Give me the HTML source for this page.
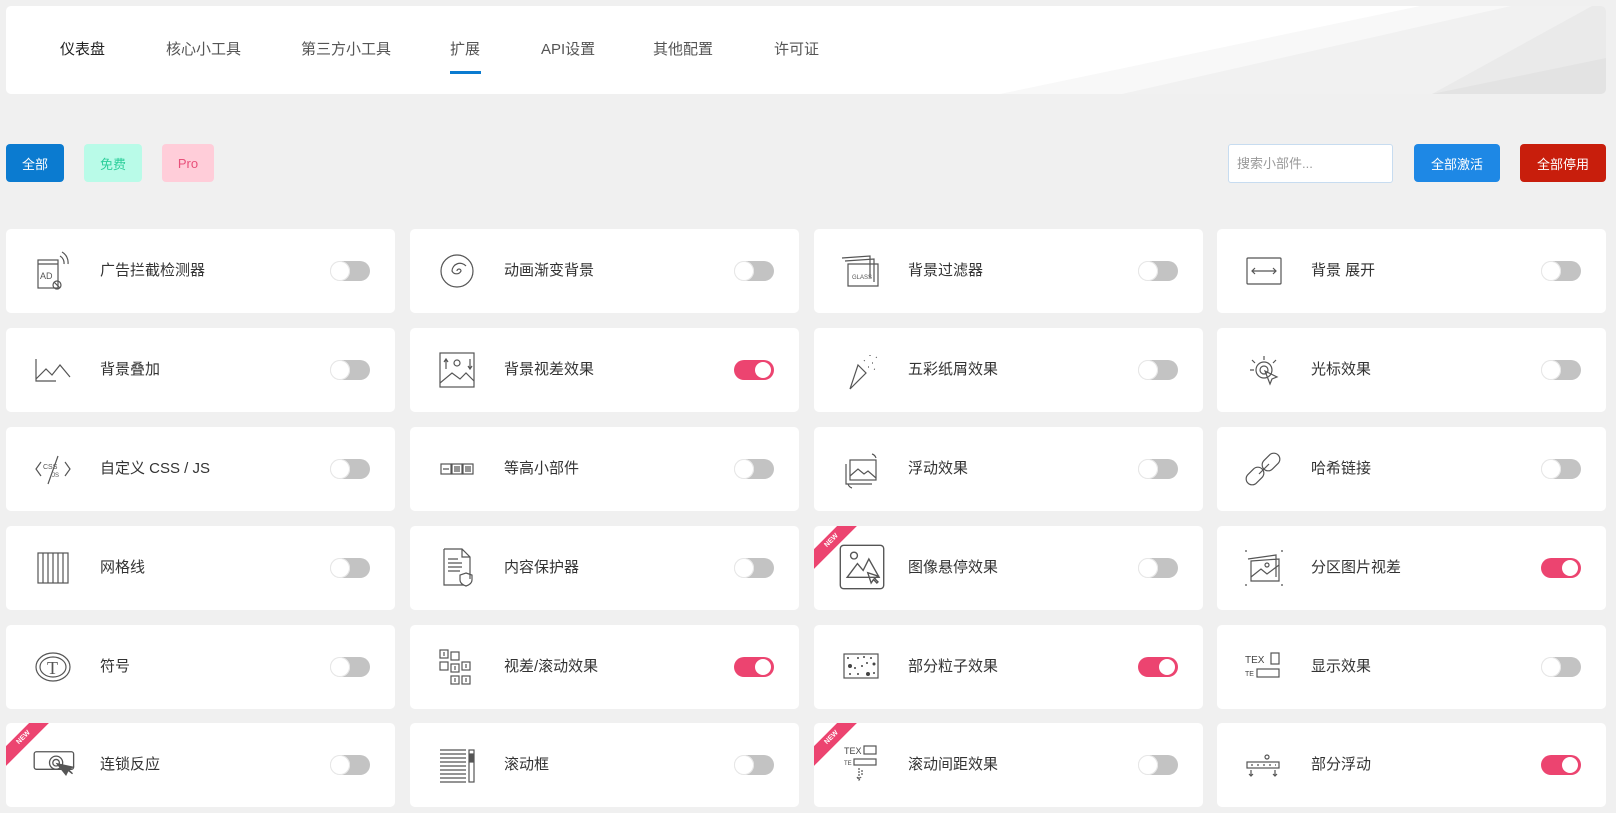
<!DOCTYPE html>
<html><head><meta charset="utf-8"><style>
*{box-sizing:border-box;margin:0;padding:0}
body{width:1616px;height:813px;background:#f0f0f0;font-family:"Liberation Sans","Noto Sans CJK SC",sans-serif;position:relative;overflow:hidden;color:#333}
.nav{position:absolute;left:6px;top:6px;width:1600px;height:88px;background:#fff;border-radius:5px;overflow:hidden}
.nav svg.bg{position:absolute;left:0;top:0}
.tab{position:absolute;top:34px;font-size:15px;color:#555;line-height:20px}
.ul{position:absolute;left:444px;top:65px;width:31px;height:3px;background:#0b7bd0}
.btn{position:absolute;top:144px;height:38px;border-radius:4px;font-size:13px;display:flex;align-items:center;justify-content:center}
.search{position:absolute;left:1228px;top:144px;width:165px;height:39px;border:1px solid #c7dcf0;border-radius:3px;background:#fff;font-size:13px;color:#999;padding:12px 8px;line-height:14px}
.card{position:absolute;width:389px;height:84px;background:#fff;border-radius:5px;overflow:hidden}
.card .ic{position:absolute;left:26px;top:21px;width:42px;height:42px}
.card .t{position:absolute;left:94px;top:32px;font-size:15px;line-height:20px;color:#333}
.tg{position:absolute;left:324px;top:32px;width:40px;height:20px;border-radius:10px;background:#c3c3c3}
.tg::after{content:"";position:absolute;left:0;top:0;width:20px;height:20px;border-radius:50%;background:#fff;box-shadow:0 0 0 1px #e6e6e6 inset}
.tg.on{background:#ec4470}
.tg.on::after{left:21px;top:2px;width:16px;height:16px;box-shadow:none}
.new{position:absolute;left:-22px;top:8px;width:80px;height:14px;background:#ec4470;transform:rotate(-45deg);color:#fff;font-size:7px;text-align:center;line-height:14px;font-weight:bold}
svg.ic{fill:none;stroke:#555;stroke-width:1.2}
</style></head><body>
<div class="nav">
<svg class="bg" width="1600" height="88"><polygon points="994,88 1414,0 1600,0 1600,88" fill="#f8f8f8"/><polygon points="1116,88 1505,0 1600,0 1600,88" fill="#f1f1f1"/><polygon points="1426,88 1586,0 1600,0 1600,88" fill="#eaeaea"/><polygon points="1426,88 1600,52 1600,88" fill="#e3e3e3"/></svg>
<div class="tab" style="left:54px;color:#222">仪表盘</div>
<div class="tab" style="left:160px">核心小工具</div>
<div class="tab" style="left:295px">第三方小工具</div>
<div class="tab" style="left:444px">扩展</div>
<div class="tab" style="left:535px">API设置</div>
<div class="tab" style="left:647px">其他配置</div>
<div class="tab" style="left:768px">许可证</div>
<div class="ul"></div>
</div>
<div class="btn" style="left:6px;width:58px;background:#0b7bd0;color:#fff">全部</div>
<div class="btn" style="left:84px;width:58px;background:#b9fbe8;color:#2ecf9b">免费</div>
<div class="btn" style="left:162px;width:52px;background:#ffcdd9;color:#e8507a">Pro</div>
<div class="search">搜索小部件...</div>
<div class="btn" style="left:1414px;width:86px;background:#1e88e5;color:#fff">全部激活</div>
<div class="btn" style="left:1520px;width:86px;background:#c81e0c;color:#fff">全部停用</div>

<!-- row 1 -->
<div class="card" style="left:6px;top:229px"><svg class="ic" viewBox="0 0 42 42"><rect x="6" y="10" width="20" height="28"/><line x1="6" y1="14" x2="26" y2="14"/><text x="8" y="29" font-size="9" fill="#555" stroke="none" font-family="Liberation Sans">AD</text><circle cx="25" cy="35" r="4"/><line x1="22" y1="32" x2="28" y2="38"/><path d="M28 6a8 8 0 0 1 4 8M30 2a12 12 0 0 1 6 12"/></svg><div class="t">广告拦截检测器</div><div class="tg"></div></div>
<div class="card" style="left:410px;top:229px"><svg class="ic" viewBox="0 0 42 42"><circle cx="21" cy="21" r="16"/><path d="M21 21a2 2 0 0 1 4 0a5 5 0 0 1-9 0a8 8 0 0 1 14-5"/></svg><div class="t">动画渐变背景</div><div class="tg"></div></div>
<div class="card" style="left:814px;top:229px"><svg class="ic" viewBox="0 0 42 42"><path d="M2 8l28-2v22M5 11l29-2v23M8 14h30v22H8z"/><text x="12" y="29" font-size="6" fill="#555" stroke="none">GLASS</text></svg><div class="t">背景过滤器</div><div class="tg"></div></div>
<div class="card" style="left:1217px;top:229px"><svg class="ic" viewBox="0 0 42 42"><rect x="4" y="8" width="34" height="26" rx="1"/><path d="M9 21h24M12 18l-3 3 3 3M30 18l3 3-3 3"/></svg><div class="t">背景 展开</div><div class="tg"></div></div>
<!-- row 2 -->
<div class="card" style="left:6px;top:328px"><svg class="ic" viewBox="0 0 42 42"><path d="M4 10v22h20M4 30l10-10 6 6 8-10 10 12"/></svg><div class="t">背景叠加</div><div class="tg"></div></div>
<div class="card" style="left:410px;top:328px"><svg class="ic" viewBox="0 0 42 42"><rect x="4" y="4" width="34" height="34"/><path d="M4 34l12-10 8 6 6-6 8 8M10 20v-10M8 13l2-3 2 3M34 10v10M32 17l2 3 2-3"/><circle cx="21" cy="14" r="3"/></svg><div class="t">背景视差效果</div><div class="tg on"></div></div>
<div class="card" style="left:814px;top:328px"><svg class="ic" viewBox="0 0 42 42"><path d="M10 40l8-24 8 8z"/><path d="M24 12l2-2M30 6v2M32 14h2M28 18h2M36 8l1 1M34 20l2 1" stroke-dasharray="1 2"/></svg><div class="t">五彩纸屑效果</div><div class="tg"></div></div>
<div class="card" style="left:1217px;top:328px"><svg class="ic" viewBox="0 0 42 42"><circle cx="21" cy="21" r="8"/><circle cx="21" cy="21" r="4"/><path d="M21 7v4M9 11l3 3M33 11l-3 3M7 21h4M22 22l12 6-5 2-2 5z"/></svg><div class="t">光标效果</div><div class="tg"></div></div>
<!-- row 3 -->
<div class="card" style="left:6px;top:427px"><svg class="ic" viewBox="0 0 42 42"><path d="M9 14l-5 7 5 7M33 14l5 7-5 7M26 8l-10 28"/><text x="11" y="21" font-size="7" fill="#555" stroke="none">CSS</text><text x="20" y="29" font-size="6" fill="#555" stroke="none">JS</text></svg><div class="t">自定义 CSS / JS</div><div class="tg"></div></div>
<div class="card" style="left:410px;top:427px"><svg class="ic" viewBox="0 0 42 42"><rect x="5" y="16" width="10" height="10"/><rect x="16" y="16" width="10" height="10"/><rect x="27" y="16" width="10" height="10"/><path d="M7 21h6M18 19h6M18 21h6M18 23h6M29 19h6M29 21h6M29 23h6"/></svg><div class="t">等高小部件</div><div class="tg"></div></div>
<div class="card" style="left:814px;top:427px"><svg class="ic" viewBox="0 0 42 42"><rect x="10" y="12" width="26" height="20"/><path d="M6 16v20h26M10 28l8-7 6 5 4-3 8 7M32 6a6 6 0 0 1 4 4M12 40a6 6 0 0 1-4-4"/></svg><div class="t">浮动效果</div><div class="tg"></div></div>
<div class="card" style="left:1217px;top:427px"><svg class="ic" viewBox="0 0 42 42"><rect x="6" y="18" width="12" height="20" rx="6" transform="rotate(45 12 28)"/><rect x="22" y="4" width="12" height="20" rx="6" transform="rotate(45 28 14)"/><path d="M16 26l10-10"/></svg><div class="t">哈希链接</div><div class="tg"></div></div>
<!-- row 4 -->
<div class="card" style="left:6px;top:526px"><svg class="ic" viewBox="0 0 42 42"><rect x="6" y="6" width="30" height="30"/><path d="M11 6v30M16 6v30M21 6v30M26 6v30M31 6v30"/></svg><div class="t">网格线</div><div class="tg"></div></div>
<div class="card" style="left:410px;top:526px"><svg class="ic" viewBox="0 0 42 42"><path d="M8 2h18l8 8v22M26 2v8h8M8 2v36h20"/><path d="M12 12h10M12 16h14M12 20h14M12 24h12"/><path d="M30 26l6 2v5c0 3-3 5-6 6-3-1-6-3-6-6v-5z"/></svg><div class="t">内容保护器</div><div class="tg"></div></div>
<div class="card" style="left:814px;top:526px"><div class="new">NEW</div><svg class="ic" viewBox="0 0 42 42" style="left:24px;top:17px;width:48px;height:48px"><rect x="2" y="2" width="38" height="38" rx="3"/><circle cx="14" cy="11" r="3"/><path d="M8 30l9-12 5 6 5-10 9 16zM26 26l3 9 2-3 3 3 1-1-3-3 3-2z"/></svg><div class="t">图像悬停效果</div><div class="tg"></div></div>
<div class="card" style="left:1217px;top:526px"><svg class="ic" viewBox="0 0 42 42"><path d="M5 12l28-4v22M8 14l28-2v22H8z"/><path d="M8 30l10-8 6 5 12-9"/><circle cx="24" cy="18" r="2"/><path d="M2 4h2M38 4h2M2 38h2M38 38h2"/></svg><div class="t">分区图片视差</div><div class="tg on"></div></div>
<!-- row 5 -->
<div class="card" style="left:6px;top:625px"><svg class="ic" viewBox="0 0 42 42"><ellipse cx="21" cy="21" rx="17" ry="14"/><ellipse cx="21" cy="21" rx="13" ry="10"/><text x="15" y="28" font-size="18" fill="#555" stroke="none" font-family="Liberation Serif">T</text></svg><div class="t">符号</div><div class="tg"></div></div>
<div class="card" style="left:410px;top:625px"><svg class="ic" viewBox="0 0 42 42"><rect x="4" y="4" width="8" height="8"/><rect x="15" y="6" width="8" height="8"/><rect x="4" y="16" width="8" height="8"/><rect x="15" y="18" width="8" height="8"/><rect x="26" y="16" width="8" height="8"/><rect x="15" y="30" width="8" height="8"/><rect x="26" y="30" width="8" height="8"/><path d="M8 10V6M19 24v-4M30 22v-4M19 36v-4M30 36v-4"/></svg><div class="t">视差/滚动效果</div><div class="tg on"></div></div>
<div class="card" style="left:814px;top:625px"><svg class="ic" viewBox="0 0 42 42"><rect x="4" y="8" width="34" height="24"/><g fill="#444" stroke="none"><circle cx="10" cy="20" r="2"/><circle cx="28" cy="28" r="2"/><circle cx="34" cy="18" r="1.5"/><circle cx="8" cy="12" r="1"/><circle cx="18" cy="12" r="1"/><circle cx="24" cy="11" r="1"/><circle cx="31" cy="12" r="1"/><circle cx="15" cy="22" r="1"/><circle cx="22" cy="20" r="1"/><circle cx="27" cy="17" r="1"/><circle cx="10" cy="28" r="1"/><circle cx="18" cy="28" r="1"/><circle cx="34" cy="27" r="1"/></g></svg><div class="t">部分粒子效果</div><div class="tg on"></div></div>
<div class="card" style="left:1217px;top:625px"><svg class="ic" viewBox="0 0 42 42"><text x="2" y="17" font-size="10" fill="#444" stroke="none" font-family="Liberation Sans">TEX</text><rect x="28" y="7" width="8" height="11"/><text x="2" y="30" font-size="7" fill="#444" stroke="none" font-family="Liberation Sans">TE</text><rect x="14" y="23" width="22" height="8"/></svg><div class="t">显示效果</div><div class="tg"></div></div>
<!-- row 6 -->
<div class="card" style="left:6px;top:723px"><div class="new">NEW</div><svg class="ic" viewBox="0 0 42 42" style="left:26px;top:20px;width:46px;height:46px"><rect x="2" y="8" width="36" height="16" rx="2"/><circle cx="22" cy="18" r="6"/><circle cx="22" cy="18" r="3"/><path d="M23 19l8 10 2-4 4 3-4-4 4-2z" fill="#555"/></svg><div class="t">连锁反应</div><div class="tg"></div></div>
<div class="card" style="left:410px;top:723px"><svg class="ic" viewBox="0 0 42 42"><path d="M4 6h26M4 10h26M4 14h26M4 18h26M4 22h26M4 26h26M4 30h26M4 34h26M4 38h26"/><rect x="33" y="6" width="5" height="32"/><rect x="34" y="10" width="3" height="8" fill="#555"/></svg><div class="t">滚动框</div><div class="tg"></div></div>
<div class="card" style="left:814px;top:723px"><div class="new">NEW</div><svg class="ic" viewBox="0 0 42 42"><text x="4" y="10" font-size="9" fill="#444" stroke="none" font-family="Liberation Sans">TEX</text><rect x="24" y="2" width="12" height="8"/><text x="4" y="21" font-size="6" fill="#444" stroke="none" font-family="Liberation Sans">TE</text><rect x="14" y="15" width="22" height="6"/><path d="M19 24v12M17 33l2 3 2-3M22 26v6" stroke-dasharray="2 1"/></svg><div class="t">滚动间距效果</div><div class="tg"></div></div>
<div class="card" style="left:1217px;top:723px"><svg class="ic" viewBox="0 0 42 42"><rect x="4" y="18" width="32" height="6"/><path d="M8 21h2M14 21h2M20 21h2M26 21h2M32 21h1M8 26v6M6 30l2 2 2-2M32 26v6M30 30l2 2 2-2"/><circle cx="24" cy="13" r="2"/></svg><div class="t">部分浮动</div><div class="tg on"></div></div>
</body></html>
